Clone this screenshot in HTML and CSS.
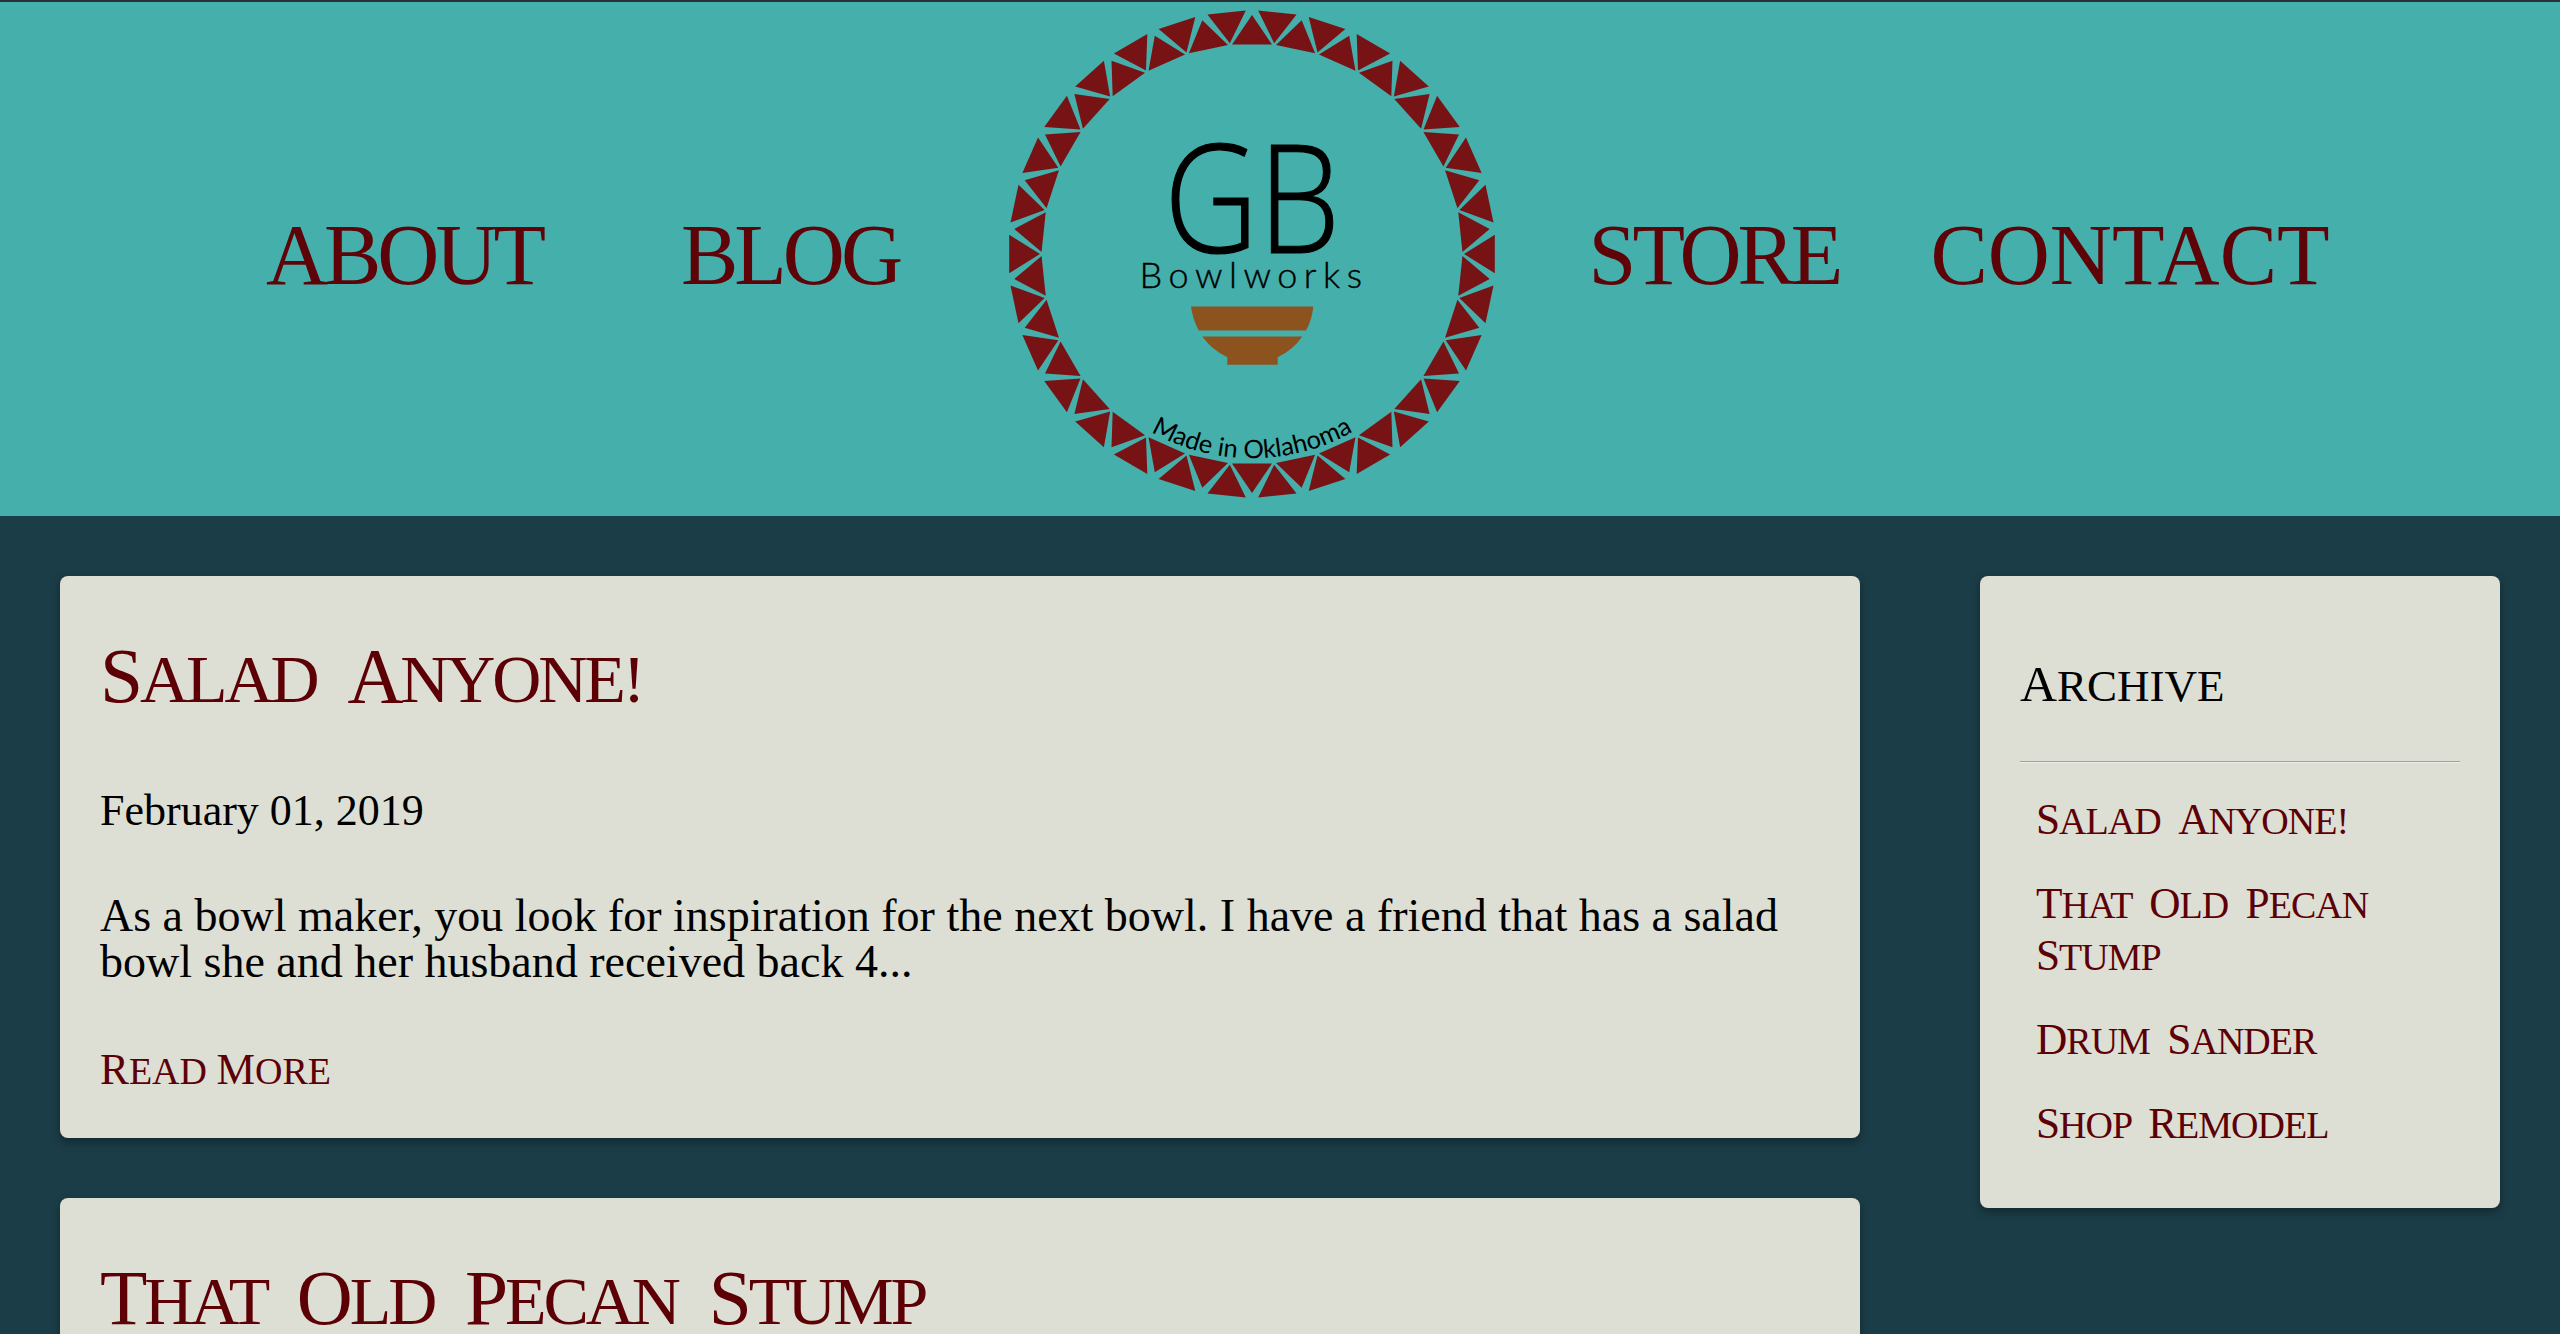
FILE: index.html
```html
<!DOCTYPE html>
<html lang="en">
<head>
<meta charset="utf-8">
<title>GB Bowlworks</title>
<link rel="stylesheet" href="styles.css">
</head>
<body>
<header class="site-header">
  <a class="nav-link" href="#">About</a>
  <a class="nav-link" href="#">Blog</a>
  <svg class="logo" viewBox="-250 -250 500 500" role="img" aria-label="GB Bowlworks logo">
    <defs>
      <g id="pair">
        <polygon points="-20,-209.5 20,-209.5 0,-239"/>
        <polygon points="-19.3,-242.8 19.3,-242.8 0,-212" transform="rotate(6)"/>
      </g>
      <path id="arc" d="M -112 171 A 205 205 0 0 0 112 171"/>
    </defs>
    <g class="ring">
      <use href="#pair"/>
      <use href="#pair" transform="rotate(12)"/>
      <use href="#pair" transform="rotate(24)"/>
      <use href="#pair" transform="rotate(36)"/>
      <use href="#pair" transform="rotate(48)"/>
      <use href="#pair" transform="rotate(60)"/>
      <use href="#pair" transform="rotate(72)"/>
      <use href="#pair" transform="rotate(84)"/>
      <use href="#pair" transform="rotate(96)"/>
      <use href="#pair" transform="rotate(108)"/>
      <use href="#pair" transform="rotate(120)"/>
      <use href="#pair" transform="rotate(132)"/>
      <use href="#pair" transform="rotate(144)"/>
      <use href="#pair" transform="rotate(156)"/>
      <use href="#pair" transform="rotate(168)"/>
      <use href="#pair" transform="rotate(180)"/>
      <use href="#pair" transform="rotate(192)"/>
      <use href="#pair" transform="rotate(204)"/>
      <use href="#pair" transform="rotate(216)"/>
      <use href="#pair" transform="rotate(228)"/>
      <use href="#pair" transform="rotate(240)"/>
      <use href="#pair" transform="rotate(252)"/>
      <use href="#pair" transform="rotate(264)"/>
      <use href="#pair" transform="rotate(276)"/>
      <use href="#pair" transform="rotate(288)"/>
      <use href="#pair" transform="rotate(300)"/>
      <use href="#pair" transform="rotate(312)"/>
      <use href="#pair" transform="rotate(324)"/>
      <use href="#pair" transform="rotate(336)"/>
      <use href="#pair" transform="rotate(348)"/>
    </g>
    <text class="logo-gb" x="0" y="-1.5" text-anchor="middle" textLength="176" lengthAdjust="spacingAndGlyphs">GB</text>
    <text class="logo-name" x="2" y="33.5" text-anchor="middle">Bowlworks</text>
    <g class="bowl">
      <path d="M-61 52.5H61.3Q60 66 54 76.5H-53.3Q-59 66 -61 52.5Z"/>
      <path d="M-49.7 82.5H50.3Q41 96 25.7 103.2V110.8H-24.7V103.2Q-40 96 -49.7 82.5Z"/>
    </g>
    <text class="logo-made"><textPath href="#arc" startOffset="50%" text-anchor="middle">Made in Oklahoma</textPath></text>
  </svg>
  <a class="nav-link" href="#">Store</a>
  <a class="nav-link nav-link-wide" href="#">Contact</a>
</header>
<div class="content">
  <main class="posts">
    <article class="card post">
      <h2 class="post-title"><span class="cap">S</span>alad <span class="cap">A</span>nyone!</h2>
      <p class="post-date">February 01, 2019</p>
      <p class="post-text">As a bowl maker, you look for inspiration for the next bowl. I have a friend that has a salad bowl she and her husband received back 4...</p>
      <a class="read-more" href="#"><span class="cap">R</span>ead <span class="cap">M</span>ore</a>
    </article>
    <article class="card post">
      <h2 class="post-title"><span class="cap">T</span>hat <span class="cap">O</span>ld <span class="cap">P</span>ecan <span class="cap">S</span>tump</h2>
    </article>
  </main>
  <aside class="card archive">
    <h3 class="archive-title"><span class="cap">A</span>rchive</h3>
    <hr class="rule">
    <ul class="archive-list">
      <li><a href="#"><span class="cap">S</span>alad <span class="cap">A</span>nyone!</a></li>
      <li><a href="#"><span class="cap">T</span>hat <span class="cap">O</span>ld <span class="cap">P</span>ecan <span class="cap">S</span>tump</a></li>
      <li><a href="#"><span class="cap">D</span>rum <span class="cap">S</span>ander</a></li>
      <li><a href="#"><span class="cap">S</span>hop <span class="cap">R</span>emodel</a></li>
    </ul>
  </aside>
</div>
</body>
</html>
```
FILE: styles.css
```css
* { box-sizing: border-box; }
html, body { margin: 0; height: 100%; overflow: hidden; }
body {
  background: #1b3d47;
  color: #000;
  font-family: "Liberation Serif", serif;
}
a { color: inherit; text-decoration: none; }

.site-header {
  display: grid;
  grid-template-columns: 400px 372px 552px 372px 460px;
  justify-items: center;
  align-items: center;
  height: 516px;
  padding: 0 0 11px 204px;
  border-top: 2px solid #263238;
  background: #45afab;
}
.nav-link {
  margin-top: 2px;
  font-size: 86px;
  line-height: 100px;
  text-transform: uppercase;
  letter-spacing: -4px;
  color: #5e0409;
}
.nav-link-wide { letter-spacing: 0; }
.logo { width: 500px; height: 500px; display: block; }
.ring { fill: #781315; }
.bowl { fill: #8c531f; }
.logo-gb { font-family: "Open Sans", sans-serif; font-weight: 300; font-size: 151px; fill: #000; stroke: #000; stroke-width: 1.2px; }
.logo-name { font-family: "Lato", sans-serif; font-weight: 300; font-size: 36px; letter-spacing: 6.5px; fill: #000; stroke: #000; stroke-width: 0.4px; }
.logo-made { font-family: "Lato", sans-serif; font-weight: 400; font-size: 25.5px; fill: #000; }

.content {
  display: flex;
  align-items: flex-start;
  justify-content: space-between;
  padding: 60px 60px 0;
}
.posts { width: 1800px; display: flex; flex-direction: column; gap: 60px; }
.card {
  background: #dddfd4;
  border-radius: 8px;
  box-shadow: 0 4px 10px rgba(0, 0, 0, 0.35);
}
.post { padding: 40px; min-height: 562px; }
.post:last-child { min-height: 300px; }

.cap { font-size: 1.14em; }
.post-title {
  margin: 17px 0 0;
  font-size: 68px;
  line-height: 86px;
  font-weight: 400;
  text-transform: uppercase;
  letter-spacing: -3.1px;
  word-spacing: 17px;
  color: #5c0006;
}
.post-date { margin: 62px 0 0; font-size: 44px; line-height: 54px; }
.post-text { margin: 55px 0 0; font-size: 46px; line-height: 46px; }
.read-more {
  display: block;
  margin-top: 58px;
  font-size: 38px;
  line-height: 52px;
  text-transform: uppercase;
  color: #5c0006;
}

.archive { width: 520px; height: 632px; padding: 40px; }
.archive-title {
  margin: 40px 0 0;
  font-size: 45px;
  line-height: 56px;
  font-weight: 400;
  text-transform: uppercase;
}
.rule {
  margin: 47px 0 0;
  height: 2px;
  border: 0;
  border-top: 1px solid #a0a0a0;
  border-bottom: 1px solid #eeeeee;
}
.archive-list { list-style: none; margin: 31px 0 0; padding: 0 0 0 16px; }
.archive-list li {
  margin-bottom: 32px;
  font-size: 38px;
  line-height: 50px;
  text-transform: uppercase;
  letter-spacing: -1px;
  word-spacing: 9px;
  color: #5c0006;
}
```
